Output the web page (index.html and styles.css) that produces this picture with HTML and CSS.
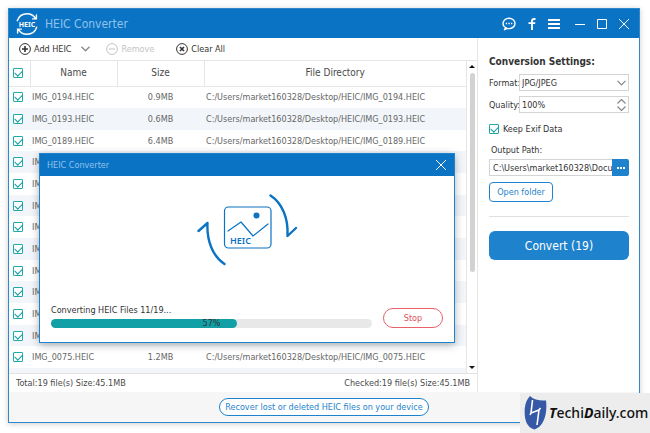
FILE: index.html
```html
<!DOCTYPE html>
<html lang="en">
<head>
<meta charset="utf-8">
<title>HEIC Converter</title>
<link rel="stylesheet" href="styles.css">
</head>
<body>
<div class="window">
  <header class="titlebar">
    <svg class="logo" width="24" height="24" viewBox="0 0 24 24" fill="none" stroke="#fff" stroke-width="1.4" stroke-linecap="round">
      <path d="M2.300 8.800C3.700 4.600 7.500 1.800 12 1.800c3.700 0 6.900 1.900 8.600 4.900M21.400 3v3.900h-3.800"/>
      <path d="M21.700 15.200C20.300 19.400 16.500 22.200 12 22.200c-3.700 0-6.900-1.900-8.600-4.900M2.600 21v-3.900h3.800"/>
      <text x="12" y="14.500" text-anchor="middle" class="logo-text">HEIC</text>
    </svg>
    <h1 class="app-name">HEIC Converter</h1>
    <nav class="window-tools">
      <button class="tool" aria-label="Feedback"><svg width="14" height="14" viewBox="0 0 14 14" fill="none" stroke="#fff" stroke-width="1.400"><path d="M3.800 10.600C2 9.700 1 8.200 1 6.500 1 3.600 3.700 1.300 7 1.300s6 2.300 6 5.200-2.700 5.100-6 5.100c-.8 0-1.500-.1-2.200-.3L2.200 13z"/><path d="M3.700 6.500h1.400M6.300 6.500h1.400M8.900 6.500h1.400"/></svg></button>
      <button class="tool" aria-label="Facebook"><svg width="8" height="12" viewBox="0 0 8 12" fill="none" stroke="#fff" stroke-width="1.800"><path d="M7.500 1H6.200C4.700 1 4 1.800 4 3.200V12M.5 5.200h6.700"/></svg></button>
      <button class="tool" aria-label="Menu"><svg width="12" height="10" viewBox="0 0 12 10" stroke="#fff" stroke-width="2"><path d="M0 1h12M0 5h12M0 9h12"/></svg></button>
      <button class="tool minimize" aria-label="Minimize"><svg width="10" height="10" viewBox="0 0 10 10" stroke="#fff"><path d="M0 5.500h10"/></svg></button>
      <button class="tool" aria-label="Maximize"><svg width="10" height="10" viewBox="0 0 10 10" fill="none" stroke="#fff"><path d="M.5.500h9v9h-9z"/></svg></button>
      <button class="tool" aria-label="Close"><svg width="10" height="10" viewBox="0 0 10 10" stroke="#fff"><path d="M0 0l10 10M10 0L0 10"/></svg></button>
    </nav>
  </header>

  <div class="main">
    <section class="files">
      <div class="toolbar">
        <button class="action add"><svg width="12" height="12" viewBox="0 0 12 12" fill="none" stroke="currentColor"><circle cx="6" cy="6" r="5.400"/><path stroke-width="1.600" d="M3 6h6M6 3v6"/></svg>Add HEIC</button>
        <button class="action more" aria-label="More ways to add"><svg width="9" height="6" viewBox="0 0 9 6" fill="none" stroke="#888" stroke-width="1.300"><path d="M.5.800l4 4 4-4"/></svg></button>
        <button class="action remove" disabled><svg width="12" height="12" viewBox="0 0 12 12" fill="none" stroke="currentColor"><circle cx="6" cy="6" r="5.400"/><path d="M3 6h6"/></svg>Remove</button>
        <button class="action clear"><svg width="12" height="12" viewBox="0 0 12 12" fill="none" stroke="currentColor"><circle cx="6" cy="6" r="5.400"/><path stroke-width="1.600" d="M4 4l4 4M8 4L4 8"/></svg>Clear All</button>
      </div>
      <div class="list">
        <div class="table-clip">
          <table class="table">
            <thead>
              <tr><th class="col-check"><input type="checkbox" class="check" checked aria-label="Select all"></th><th class="col-name">Name</th><th class="col-size">Size</th><th class="col-dir">File Directory</th></tr>
            </thead>
            <tbody>
              <tr><td><input type="checkbox" class="check" checked aria-label="IMG_0194"></td><td>IMG_0194.HEIC</td><td class="size">0.9MB</td><td>C:/Users/market160328/Desktop/HEIC/IMG_0194.HEIC</td></tr>
              <tr><td><input type="checkbox" class="check" checked aria-label="IMG_0193"></td><td>IMG_0193.HEIC</td><td class="size">0.6MB</td><td>C:/Users/market160328/Desktop/HEIC/IMG_0193.HEIC</td></tr>
              <tr><td><input type="checkbox" class="check" checked aria-label="IMG_0189"></td><td>IMG_0189.HEIC</td><td class="size">6.4MB</td><td>C:/Users/market160328/Desktop/HEIC/IMG_0189.HEIC</td></tr>
              <tr><td><input type="checkbox" class="check" checked aria-label="File 4"></td><td>IM</td><td></td><td></td></tr>
              <tr><td><input type="checkbox" class="check" checked aria-label="File 5"></td><td>IM</td><td></td><td></td></tr>
              <tr><td><input type="checkbox" class="check" checked aria-label="File 6"></td><td>IM</td><td></td><td></td></tr>
              <tr><td><input type="checkbox" class="check" checked aria-label="File 7"></td><td>IM</td><td></td><td></td></tr>
              <tr><td><input type="checkbox" class="check" checked aria-label="File 8"></td><td>IM</td><td></td><td></td></tr>
              <tr><td><input type="checkbox" class="check" checked aria-label="File 9"></td><td>IM</td><td></td><td></td></tr>
              <tr><td><input type="checkbox" class="check" checked aria-label="File 10"></td><td>IM</td><td></td><td></td></tr>
              <tr><td><input type="checkbox" class="check" checked aria-label="File 11"></td><td>IM</td><td></td><td></td></tr>
              <tr><td><input type="checkbox" class="check" checked aria-label="File 12"></td><td>IM</td><td></td><td></td></tr>
              <tr><td><input type="checkbox" class="check" checked aria-label="IMG_0075"></td><td>IMG_0075.HEIC</td><td class="size">1.2MB</td><td>C:/Users/market160328/Desktop/HEIC/IMG_0075.HEIC</td></tr>
              <tr><td><input type="checkbox" class="check" checked aria-label="File 14"></td><td></td><td></td><td></td></tr>
            </tbody>
          </table>
        </div>
        <div class="scrollbar">
          <span class="arrow up"></span>
          <div class="track"><div class="thumb"></div></div>
          <span class="arrow down"></span>
        </div>
      </div>
      <div class="status"><span>Total:19 file(s) Size:45.1MB</span><span>Checked:19 file(s) Size:45.1MB</span></div>
    </section>

    <aside class="settings">
      <h2 class="heading">Conversion Settings:</h2>
      <div class="field">
        <label for="format">Format:</label>
        <div class="control">
          <select id="format" class="box"><option>JPG/JPEG</option></select>
          <svg class="hint" width="9" height="6" viewBox="0 0 9 6" fill="none" stroke="#888" stroke-width="1.200"><path d="M.5.800l4 4 4-4"/></svg>
        </div>
      </div>
      <div class="field">
        <label for="quality">Quality:</label>
        <div class="control">
          <input id="quality" class="box" type="text" value="100%">
          <svg class="hint" width="9" height="12" viewBox="0 0 9 12" fill="none" stroke="#888" stroke-width="1.200"><path d="M.5 4.500l4-4 4 4M.5 7.500l4 4 4-4"/></svg>
        </div>
      </div>
      <label class="exif"><input type="checkbox" class="check" checked>Keep Exif Data</label>
      <label class="path-label" for="path">Output Path:</label>
      <div class="path">
        <input id="path" class="path-input" type="text" value="C:\Users\market160328\Docu">
        <button class="browse" aria-label="Browse"><svg width="8" height="2" viewBox="0 0 8 2" fill="#fff"><path d="M0 0h2v2H0zM3 0h2v2H3zM6 0h2v2H6z"/></svg></button>
      </div>
      <button class="open">Open folder</button>
      <hr class="rule">
      <button class="convert">Convert (19)</button>
    </aside>
  </div>

  <footer class="footer"><button class="recover">Recover lost or deleted HEIC files on your device</button></footer>

  <div class="dialog" role="dialog" aria-labelledby="dialog-title">
    <div class="dialog-bar">
      <h2 class="dialog-title" id="dialog-title">HEIC Converter</h2>
      <button class="tool" aria-label="Close dialog"><svg width="10" height="10" viewBox="0 0 10 10" stroke="#fff"><path d="M0 0l10 10M10 0L0 10"/></svg></button>
    </div>
    <div class="dialog-art">
      <svg width="102" height="76" viewBox="0 0 102 76" fill="none" stroke="#0a73c4" stroke-linecap="round" stroke-linejoin="round">
        <path stroke-width="2.400" d="M74.500 3.500C86 11 92.500 26 91.500 44l8.500-8"/>
        <path stroke-width="2.400" d="M28.500 72C17 64.500 10.500 49 11.500 31L2.500 39"/>
        <rect x="28.500" y="15" width="46.500" height="41" rx="4" stroke-width="1.200"/>
        <path stroke-width="1.200" d="M32 39l13-9 12 14 15-12"/>
        <circle cx="60.500" cy="23.500" r="3" fill="#0a73c4" stroke="none"/>
        <text x="34" y="52" class="art-text">HEIC</text>
      </svg>
    </div>
    <div class="dialog-foot">
      <div class="progress">
        <div class="progress-label">Converting HEIC Files 11/19...</div>
        <div class="bar" role="progressbar" aria-valuenow="57" aria-valuemin="0" aria-valuemax="100"><div class="fill" style="width:58%"></div><span class="percent">57%</span></div>
      </div>
      <button class="stop">Stop</button>
    </div>
  </div>
</div>

<div class="brand">
  <svg width="23" height="34" viewBox="0 0 23 34"><path fill="#3559a7" d="M6 0c4 4 10 5 16 4.500C23.500 17 20.500 30 10.500 33.500 2 31 0 22 .8 12 1.400 7 3 3 6 0z"/><path fill="none" stroke="#fff" stroke-width="1.600" stroke-linejoin="round" d="M8.500 4l-1.500 13 8-3-2 15M7 17l-1 2M15 14l1.500-2"/></svg>
  <span class="brand-name"><i>T</i>echi<i>D</i>aily.com</span>
</div>
</body>
</html>
```

FILE: styles.css
```css
* { box-sizing: border-box; }

body {
  margin: 0;
  height: 100vh;
  padding: 8px 10px 10px 8px;
  background: #fff;
  color: #4a4a4a;
  font-family: "DejaVu Sans Condensed", "DejaVu Sans", sans-serif;
  font-size: 9px;
  line-height: 14px;
}

button, input, select { font: inherit; color: inherit; margin: 0; }
button { padding: 0; border: 0; background: none; }
svg { display: block; flex: none; }
h1, h2 { margin: 0; }

.window {
  position: relative;
  display: flex;
  flex-direction: column;
  height: 100%;
  border: 1px solid #2f88cc;
  box-shadow: 0 1px 6px rgba(0, 0, 0, 0.2);
  background: #fff;
}

.titlebar {
  display: flex;
  align-items: center;
  height: 29px;
  flex: none;
  padding: 0 10px 0 6px;
  background: #0a73c4;
}
.logo-text { font-family: "Noto Sans", sans-serif; font-size: 7px; font-weight: 700; fill: #fff; stroke: none; }
.app-name {
  flex: 1;
  margin-left: 6px;
  font-size: 12px;
  font-weight: 400;
  color: #8fc3ec;
}
.window-tools { display: flex; align-items: center; gap: 12px; }
.tool { display: flex; }
.minimize { margin-left: 3px; }

.main { display: flex; flex: 1; min-height: 0; }
.files { display: flex; flex-direction: column; flex: 1; min-width: 0; }

.toolbar {
  display: flex;
  align-items: center;
  height: 23px;
  padding-left: 10px;
  border-bottom: 1px solid #e6e6e6;
}
.action { display: flex; align-items: center; gap: 3px; color: #333; }
.more { margin-left: 10px; }
.remove { margin-left: 16px; color: #c4c4c4; }
.clear { margin-left: 22px; }

.list { display: flex; flex: 1; min-height: 0; border-bottom: 1px solid #e2e2e2; }
.table-clip { flex: 1; overflow: hidden; }
.table { width: 100%; border-collapse: collapse; table-layout: fixed; color: #666; }
.table th {
  height: 25px;
  padding: 0;
  border-bottom: 1px solid #e6e6e6;
  font-size: 10px;
  font-weight: 400;
  color: #4a4a4a;
}
.table th + th { border-left: 1px solid #e6e6e6; }
.col-check { width: 21px; }
.col-name, .col-size { width: 87px; }
.table td { height: 22px; padding: 0 0 0 2px; white-space: nowrap; }
.table tr:nth-child(3n) td { height: 21px; }
.table tbody tr:nth-child(even) { background: #f2f6fa; }
.table .size { padding: 0; text-align: center; }
.table .col-check, .table td:first-child { padding: 0 0 0 4px; text-align: left; }

.check {
  appearance: none;
  display: block;
  flex: none;
  width: 10px;
  height: 10px;
  border: 1px solid #1fa9a9;
  border-radius: 1px;
  background: #fff;
}
.check:checked::before {
  content: "";
  display: block;
  width: 6px;
  height: 4px;
  margin: 1px;
  border: solid #0f9d9d;
  border-width: 0 0 1px 1px;
  transform: rotate(-45deg);
}

.scrollbar {
  display: flex;
  flex-direction: column;
  align-items: center;
  width: 11px;
  padding: 4px 0;
  border-left: 1px solid #e6e6e6;
}
.arrow { border: 3px solid transparent; border-top-width: 0; border-bottom: 3px solid #111; }
.arrow.down { border-bottom-width: 0; border-top: 3px solid #111; }
.track { flex: 1; width: 5px; padding-top: 5px; }
.thumb { height: 68%; border-radius: 3px; background: #d2d2d2; }

.status {
  display: flex;
  justify-content: space-between;
  align-items: center;
  height: 18px;
  padding: 0 7px;
}

.settings {
  display: flex;
  flex-direction: column;
  width: 162px;
  padding: 16px 10px 0 11px;
  border-left: 1px solid #e6e6e6;
  color: #333;
}
.heading { margin-bottom: 4px; font-size: 10px; line-height: 16px; white-space: nowrap; }
.field { display: flex; align-items: center; margin-bottom: 5px; }
.field label { width: 30px; white-space: nowrap; }
.control { position: relative; flex: 1; }
.box {
  appearance: none;
  display: block;
  width: 100%;
  height: 17px;
  padding: 0 2px;
  border: 1px solid #d4d4d4;
  border-radius: 0;
  background: #fff;
}
.hint { position: absolute; right: 3px; top: 0; bottom: 0; margin: auto; pointer-events: none; }
.exif { display: flex; align-items: center; gap: 4px; margin-top: 4px; }
.path-label { margin: 7px 0 2px 2px; }
.path { display: flex; }
.path-input {
  flex: 1;
  min-width: 0;
  height: 17px;
  padding: 0 0 0 3px;
  border: 1px solid #d4d4d4;
  border-right: 0;
}
.browse {
  display: flex;
  align-items: center;
  justify-content: center;
  width: 17px;
  border-radius: 0 2px 2px 0;
  background: #1e83cc;
}
.open {
  align-self: flex-start;
  width: 64px;
  height: 20px;
  margin-top: 6px;
  border: 1px solid #1e83cc;
  border-radius: 4px;
  color: #1e83cc;
}
.rule { width: 100%; margin: 14px 0; border: 0; border-top: 1px solid #e0e0e0; }
.convert {
  height: 29px;
  border-radius: 6px;
  background: #1e83cc;
  color: #fff;
  font-size: 12px;
}

.footer {
  display: flex;
  align-items: center;
  justify-content: center;
  height: 30px;
  flex: none;
  background: #f6f6f6;
}
.recover {
  height: 18px;
  padding: 0 5px;
  border: 1px solid #1e83cc;
  border-radius: 9px;
  background: #fff;
  color: #1e83cc;
}

.dialog {
  position: absolute;
  left: 30px;
  top: 144px;
  width: 416px;
  border: 1px solid #1e83cc;
  box-shadow: 0 2px 8px rgba(0, 0, 0, 0.3);
  background: #fff;
}
.dialog-bar {
  display: flex;
  align-items: center;
  justify-content: space-between;
  height: 22px;
  padding: 0 8px 0 7px;
  background: #0a73c4;
}
.dialog-title { font-size: 9px; font-weight: 400; color: #8fc3ec; }
.dialog-art { display: flex; justify-content: center; padding: 16px 0 0; }
.art-text { font-family: "Noto Sans", sans-serif; font-size: 9px; font-weight: 600; fill: #0a73c4; stroke: none; }
.dialog-foot {
  display: flex;
  align-items: flex-end;
  gap: 11px;
  padding: 35px 11px 14px 11px;
}
.progress { flex: 1; color: #333; }
.progress-label { margin-bottom: 2px; }
.bar {
  display: grid;
  align-items: center;
  height: 9px;
  border-radius: 5px;
  background: #e8e8e8;
}
.fill, .percent { grid-area: 1 / 1; }
.fill { height: 9px; border-radius: 5px; background: #10a0a5; }
.percent { justify-self: center; line-height: 9px; }
.stop {
  width: 60px;
  height: 20px;
  border: 1px solid #e8606a;
  border-radius: 10px;
  color: #e05060;
}

.brand {
  position: fixed;
  right: 0;
  bottom: 0;
  display: flex;
  align-items: center;
  gap: 2px;
  width: 130px;
  height: 40px;
  padding-left: 4px;
  background: #ededed;
}
.brand-name { font-family: "Noto Sans", sans-serif; font-size: 14px; font-weight: 500; line-height: 20px; color: #111; }
.brand-name i { font-weight: 700; }
```
